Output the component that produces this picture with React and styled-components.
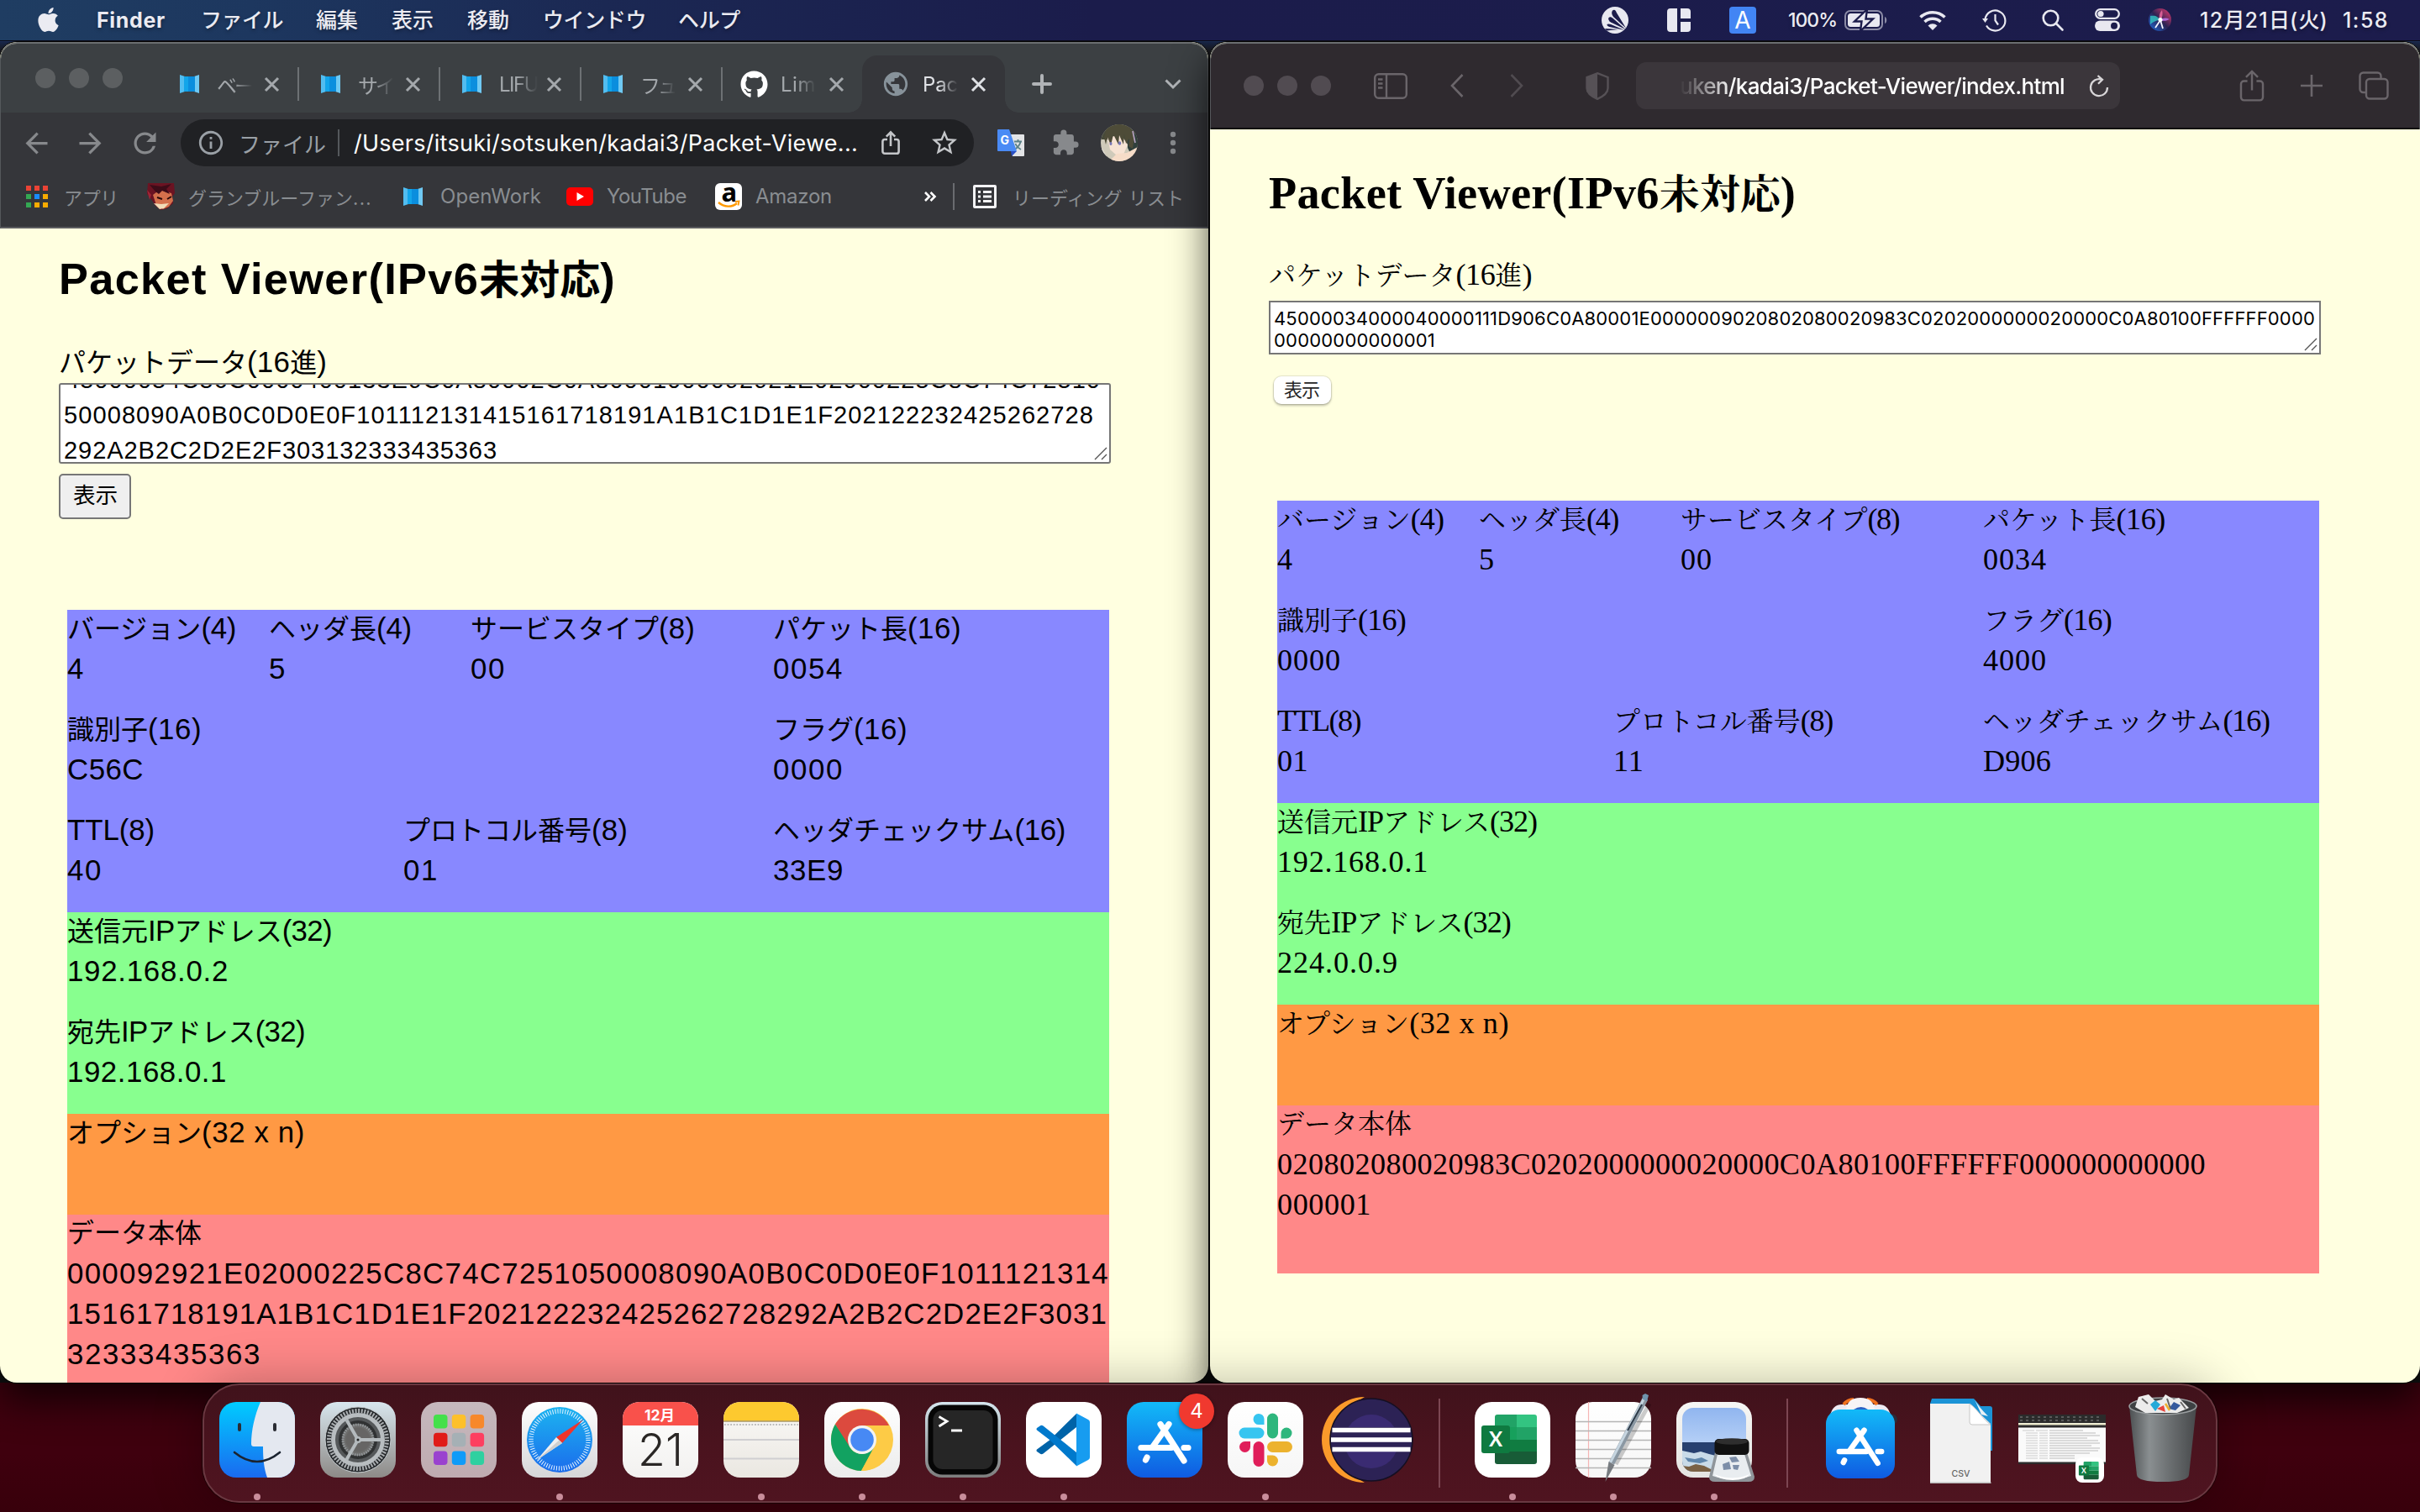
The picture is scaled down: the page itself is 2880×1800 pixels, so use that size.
import React, { useLayoutEffect, useRef, useState } from "react";
import styled, { createGlobalStyle, css } from "styled-components";
import { FaApple, FaGithub } from "react-icons/fa";
import {
  MdArrowBack,
  MdArrowForward,
  MdRefresh,
  MdInfoOutline,
  MdStarBorder,
  MdExtension,
  MdPublic,
} from "react-icons/md";

const GOTHIC = '"Liberation Sans", "Noto Sans CJK JP", sans-serif';
const MINCHO = '"Liberation Serif", "Noto Serif CJK JP", "Noto Sans CJK JP", serif';
const SYSTEM = 'Inter, "Noto Sans CJK JP", sans-serif';

const Global = createGlobalStyle`
  * { box-sizing: border-box; }
  html, body { margin: 0; padding: 0; }
  body { width: 2880px; height: 1800px; overflow: hidden; background: #3b000c; }
  svg { display: block; overflow: visible; flex: none; }
`;

/* ---------- Text ---------- */

const Line = styled.span`
  display: block;
  flex: none;
  white-space: nowrap;
  width: ${(p) => (p.$w ? `${p.$w}px` : "auto")};
  margin-left: ${(p) => p.$ml || 0}px;
  font-size: ${(p) => (p.$size ? `${p.$size}px` : "inherit")};
  font-weight: ${(p) => p.$weight || "inherit"};
  color: ${(p) => p.$color || "inherit"};
  ${(p) =>
    p.$fade === "right" &&
    css`
      overflow: hidden;
      mask-image: linear-gradient(90deg, #000 45%, transparent 100%);
    `}
  ${(p) =>
    p.$fade === "left" &&
    css`
      mask-image: linear-gradient(90deg, transparent 0, #000 14%);
    `}
`;
const Latin = styled.span`
  font-size: ${(p) => p.$scale}em;
  letter-spacing: var(--track);
`;
const Kana = styled.span`
  letter-spacing: ${(p) => (p.$tracked ? "var(--track)" : 0)};
`;

/* One line of text tracked to a given measure. */
function Text({ children, w, scale = 1, ...rest }) {
  const inner = useRef(null);
  const [track, setTrack] = useState(0);
  const runs = children.match(/[\x20-\x7e]+|[^\x20-\x7e]+/g);
  const latin = runs.filter((r) => /^[\x20-\x7e]/.test(r)).join("").length;
  useLayoutEffect(() => {
    if (!w) return;
    const natural = inner.current.getBoundingClientRect().width;
    setTrack((w - natural) / (latin || children.length));
  }, [children, w, latin]);
  return (
    <Line $w={w} style={{ "--track": `${track}px` }} {...rest}>
      <span ref={inner}>
        {runs.map((r, i) =>
          /^[\x20-\x7e]/.test(r) ? (
            <Latin key={i} $scale={scale}>{r}</Latin>
          ) : (
            <Kana key={i} $tracked={latin === 0}>{r}</Kana>
          )
        )}
      </span>
    </Line>
  );
}

/* ---------- Shell ---------- */

const Desktop = styled.div`
  width: 2880px;
  height: 1800px;
  display: flex;
  flex-direction: column;
  overflow: hidden;
  font-family: ${SYSTEM};
  background: linear-gradient(180deg, #2c5078 0, #1b2a55 60px, #3a000c 120px, #3f000e 1730px, #38000b 1800px);
`;
const MenuBar = styled.header`
  height: 49px;
  flex: none;
  display: flex;
  align-items: center;
  padding-left: 43px;
  padding-bottom: 1px;
  color: #ebebf2;
  font-size: 25px;
  line-height: 48px;
  font-weight: 500;
  position: relative;
  z-index: 5;
  border-bottom: 1px solid #0b0b16;
  background: linear-gradient(90deg, #1f3d62 0, #1d375f 300px, #1b2853 720px, #1b1c4b 1300px, #1c1c4c 2880px);
  text-shadow: 0 2px 4px rgba(0, 0, 0, 0.35);
`;
const Icon = styled.span`
  display: flex;
  flex: none;
  align-items: center;
  justify-content: center;
  width: ${(p) => p.$w}px;
  margin-left: ${(p) => p.$ml || 0}px;
  color: ${(p) => p.$color || "inherit"};
`;
const InputSource = styled.span`
  width: 32px;
  height: 32px;
  flex: none;
  margin-left: 46px;
  border-radius: 4px;
  background: #4285f4;
  color: #fff;
  font-size: 28px;
  line-height: 32px;
  text-align: center;
  font-weight: 400;
  text-shadow: none;
`;
const Windows = styled.main`
  display: flex;
  gap: 2px;
  height: 1597px;
  flex: none;
  background: linear-gradient(180deg, #1a2a52 0, #1c1c20 12px, #18181a 1560px, #101112 100%);
  background-clip: content-box;
  padding-top: 1px;
`;
const Window = styled.section`
  position: relative;
  z-index: ${(p) => p.$z};
  width: ${(p) => p.$w}px;
  flex: none;
  height: 1596px;
  border-radius: 20px;
  overflow: hidden;
  display: flex;
  flex-direction: column;
  background: #ffffe0;
  box-shadow: 0 0 0 1px #060606, 0 20px 46px rgba(0, 0, 0, 0.72);
`;
const Chrome = styled.div`
  flex: none;
  border-top: 2px solid #6b6e70;
  border-left: 1px solid #55585b;
  border-right: 1px solid #55585b;
  border-radius: 20px 20px 0 0;
  overflow: hidden;
`;
const Lights = styled.div`
  display: flex;
  flex: none;
  gap: 16px;
  margin-left: ${(p) => p.$ml}px;
  & > i {
    width: 24px;
    height: 24px;
    border-radius: 50%;
    background: ${(p) => p.$color};
  }
`;

/* ---------- Chrome window ---------- */

const TabStrip = styled.div`
  height: 82px;
  display: flex;
  align-items: center;
  padding-top: 14px;
  background: #3c4043;
  color: #a4a8ac;
  font-size: 24px;
`;
const TabLights = styled(Lights)`
  margin-bottom: 14px;
`;
const Tab = styled.div`
  height: 68px;
  flex: none;
  display: flex;
  align-items: center;
  width: ${(p) => p.$w}px;
  padding-left: ${(p) => p.$pl}px;
  position: relative;
  ${(p) =>
    p.$active &&
    css`
      color: #dfe1e5;
      background: #35363a;
      border-radius: 18px 18px 0 0;
      &::before,
      &::after {
        content: "";
        position: absolute;
        bottom: 0;
        width: 16px;
        height: 16px;
      }
      &::before {
        left: -16px;
        background: radial-gradient(circle at 0 0, transparent 15.5px, #35363a 16px);
      }
      &::after {
        right: -16px;
        background: radial-gradient(circle at 100% 0, transparent 15.5px, #35363a 16px);
      }
    `}
`;
const Rule = styled.i`
  width: 2px;
  flex: none;
  height: ${(p) => p.$h}px;
  margin-left: ${(p) => p.$ml || 0}px;
  background: ${(p) => p.$color || "#6d7174"};
`;
const Toolbar = styled.div`
  height: 72px;
  display: flex;
  align-items: center;
  background: #35363a;
  color: #87898c;
`;
const Omnibox = styled.div`
  width: 944px;
  height: 56px;
  flex: none;
  margin-left: 23px;
  border-radius: 28px;
  background: #202124;
  display: flex;
  align-items: center;
  font-size: 27px;
  color: #9aa0a6;
`;
const Bookmarks = styled.div`
  height: 66px;
  display: flex;
  align-items: center;
  padding-bottom: 9px;
  background: #35363a;
  border-bottom: 2px solid #5b5c60;
  color: #898d91;
  font-size: 24px;
`;
const AppsGrid = styled.div`
  display: grid;
  flex: none;
  grid-template-columns: repeat(3, 6px);
  grid-auto-rows: 6px;
  gap: 4px;
  margin-left: 30px;
`;
const Dot = styled.i`
  background: ${(p) => p.$c};
`;
const Avatar = styled.span`
  width: 44px;
  height: 44px;
  flex: none;
  margin-left: 25px;
  border-radius: 50%;
  overflow: hidden;
`;
const AmazonBadge = styled.span`
  width: 32px;
  height: 32px;
  flex: none;
  margin-left: 34px;
  border-radius: 6px;
  background: #fff;
`;

/* ---------- Safari window ---------- */

const SafariBar = styled.div`
  height: 102px;
  display: flex;
  align-items: center;
  background: #2f2a2f;
  color: #6a656a;
  border-bottom: 2px solid #0c0a0c;
`;
const AddressField = styled.div`
  width: 576px;
  height: 56px;
  flex: none;
  margin-left: 32px;
  padding-left: 52px;
  border-radius: 12px;
  background: #3b363b;
  color: #fff;
  font-size: 26px;
  font-weight: 500;
  display: flex;
  align-items: center;
`;

/* ---------- Packet Viewer page ---------- */

const Page = styled.div`
  flex: 1;
  min-height: 0;
  overflow: hidden;
  display: flex;
  flex-direction: column;
  padding: ${(p) => p.$pt}px 0 0 70px;
  color: #000;
  font-family: ${(p) => p.$font};
  font-size: 32px;
  line-height: 48px;
  ${Line} {
    height: 1lh;
  }
`;
const Heading = styled.h1`
  margin: 0;
  height: 72px;
  font-size: 48px;
  line-height: 72px;
  font-weight: 700;
`;
const Label = styled.div`
  height: 48px;
  margin-top: ${(p) => p.$mt}px;
`;
const Area = styled.div`
  width: 1252px;
  height: ${(p) => p.$h}px;
  flex: none;
  margin-top: ${(p) => p.$mt}px;
  border: 2px solid #767676;
  border-radius: ${(p) => p.$r}px;
  background: #fff;
  overflow: hidden;
  display: flex;
  flex-direction: column;
  justify-content: ${(p) => p.$justify};
  padding: ${(p) => p.$pad};
  font-family: ${(p) => p.$font};
  font-size: ${(p) => p.$size}px;
  line-height: ${(p) => p.$lh}px;
  position: relative;
  & > svg {
    position: absolute;
    right: 2px;
    bottom: 2px;
  }
`;
const Scrolled = styled.div`
  flex: none;
  margin-bottom: -7px;
`;
const ChromeButton = styled.div`
  width: 86px;
  height: 54px;
  flex: none;
  margin-top: 12px;
  border: 2px solid #767676;
  border-radius: 5px;
  background: #efefef;
  font-size: 26.67px;
  line-height: 48px;
  padding-left: 15px;
`;
const SafariButton = styled.div`
  width: 68px;
  height: 33px;
  flex: none;
  margin: 26px 0 0 6px;
  border-radius: 9px;
  background: #fff;
  color: #262626;
  box-shadow: 0 0 1px 1px rgba(0, 0, 0, 0.1), 0 2px 3px rgba(0, 0, 0, 0.25);
  font-family: ${SYSTEM};
  font-size: 22px;
  line-height: 33px;
  padding-left: 12px;
`;
const Packet = styled.div`
  width: 1240px;
  flex: none;
  margin: ${(p) => p.$mt}px 0 0 10px;
`;
const Band = styled.div`
  background: ${(p) => p.$color};
  height: ${(p) => (p.$h ? `${p.$h}px` : "auto")};
`;
const FieldRow = styled.div`
  display: grid;
  grid-template-columns: ${(p) => p.$cols};
  height: 120px;
`;
const FieldBox = styled.div`
  margin-top: -2px;
`;

function Field({ name, values = [], scale }) {
  return (
    <FieldBox>
      <Text w={name[1]} scale={scale}>{name[0]}</Text>
      {values.map(([v, w]) => (
        <Text key={v} w={w} scale={scale}>{v}</Text>
      ))}
    </FieldBox>
  );
}

const COLS = {
  4: "240px 240px 360px 400px",
  3: "400px 440px 400px",
  2: "840px 400px",
  1: "1240px",
};

function PacketTable({ bands, mt, scale }) {
  return (
    <Packet $mt={mt}>
      {bands.map((b) => (
        <Band key={b.color} $color={b.color} $h={b.h}>
          {b.rows.map((row, i) => (
            <FieldRow key={i} $cols={COLS[row.length]}>
              {row.map((f) => (
                <Field key={f[0][0]} name={f[0]} values={f.slice(1)} scale={scale} />
              ))}
            </FieldRow>
          ))}
        </Band>
      ))}
    </Packet>
  );
}

const LEFT = [
  {
    color: "#8888ff",
    rows: [
      [
        [["バージョン(4)", 201], ["4", 21]],
        [["ヘッダ長(4)", 170], ["5", 21]],
        [["サービスタイプ(8)", 267], ["00", 42]],
        [["パケット長(16)", 224], ["0054", 84]],
      ],
      [
        [["識別子(16)", 160], ["C56C", 91]],
        [["フラグ(16)", 160], ["0000", 84]],
      ],
      [
        [["TTL(8)", 104], ["40", 42]],
        [["プロトコル番号(8)", 267], ["01", 42]],
        [["ヘッダチェックサム(16)", 348], ["33E9", 84]],
      ],
    ],
  },
  {
    color: "#88ff8f",
    rows: [
      [[["送信元IPアドレス(32)", 315], ["192.168.0.2", 192]]],
      [[["宛先IPアドレス(32)", 283], ["192.168.0.1", 190]]],
    ],
  },
  { color: "#ff9944", rows: [[[["オプション(32 x n)", 283]]]] },
  {
    color: "#ff8888",
    h: 240,
    rows: [
      [
        [
          ["データ本体", 160],
          ["000092921E02000225C8C74C7251050008090A0B0C0D0E0F1011121314", 1240],
          ["15161718191A1B1C1D1E1F202122232425262728292A2B2C2D2E2F3031", 1238],
          ["32333435363", 231],
        ],
      ],
    ],
  },
];

const RIGHT = [
  {
    color: "#8888ff",
    rows: [
      [
        [["バージョン(4)", 198], ["4", 19]],
        [["ヘッダ長(4)", 166], ["5", 19]],
        [["サービスタイプ(8)", 260], ["00", 38]],
        [["パケット長(16)", 217], ["0034", 76]],
      ],
      [
        [["識別子(16)", 153], ["0000", 76]],
        [["フラグ(16)", 153], ["4000", 76]],
      ],
      [
        [["TTL(8)", 99], ["01", 37]],
        [["プロトコル番号(8)", 261], ["11", 37]],
        [["ヘッダチェックサム(16)", 341], ["D906", 81]],
      ],
    ],
  },
  {
    color: "#88ff8f",
    rows: [
      [[["送信元IPアドレス(32)", 309], ["192.168.0.1", 180]]],
      [[["宛先IPアドレス(32)", 278], ["224.0.0.9", 144]]],
    ],
  },
  { color: "#ff9944", rows: [[[["オプション(32 x n)", 276]]]] },
  {
    color: "#ff8888",
    h: 200,
    rows: [
      [
        [
          ["データ本体", 160],
          ["020802080020983C0202000000020000C0A80100FFFFFF000000000000", 1105],
          ["000001", 112],
        ],
      ],
    ],
  },
];

const Grip = ({ s = 16 }) => (
  <svg width={s} height={s} viewBox="0 0 16 16" stroke="#555" strokeWidth="1.4">
    <path d="M1 15 15 1M9 15l6-6" />
  </svg>
);

/* ---------- Small icons ---------- */

const Book = () => (
  <svg width="23" height="22" viewBox="0 0 23 22">
    <path d="M0 0 6 2v18l-6 2z" fill="#52bdf0" />
    <path d="M23 0l-6 2v18l6 2z" fill="#6fc9f3" />
    <path d="M5 2h13v18H5z" fill="#0a8ede" />
    <path d="M5 2h5v18H5z" fill="#12a5ea" />
  </svg>
);
const Cross = () => (
  <svg width="17" height="17" viewBox="0 0 17 17" stroke="currentColor" strokeWidth="3">
    <path d="M1 1l15 15M16 1 1 16" />
  </svg>
);
const Share = ({ w = 22, h = 28, sw = 2.6 }) => (
  <svg width={w} height={h} viewBox="0 0 22 28" fill="none" stroke="currentColor" strokeWidth={sw}>
    <path d="M7 10H4a2.6 2.6 0 0 0-2.6 2.6v11.6A2.6 2.6 0 0 0 4 26.8h14a2.6 2.6 0 0 0 2.6-2.6V12.6A2.6 2.6 0 0 0 18 10h-3" />
    <path d="M11 18V1.6M5.8 6.6 11 1.4l5.2 5.2" />
  </svg>
);
const Translate = () => (
  <svg width="32" height="32" viewBox="0 0 32 32">
    <path d="M13 6h18a1 1 0 0 1 1 1v24a1 1 0 0 1-1 1H18z" fill="#e3e4e6" />
    <path d="M20 14.500h9M24.500 12v2.500M27.500 15c-1 4-4 7-7 9M21.500 17c1 3 4 5.500 6.500 7" stroke="#5b8187" strokeWidth="1.8" fill="none" />
    <path d="M16 26h7l-6 6z" fill="#2a4fc4" />
    <path d="M1 0h13l9 26H1a1 1 0 0 1-1-1V1a1 1 0 0 1 1-1z" fill="#4a8bf5" />
    <text x="3.500" y="18" fontSize="14" fontWeight="700" fill="#fff" fontFamily="Inter, sans-serif">G</text>
  </svg>
);
const Portrait = () => (
  <svg width="44" height="44" viewBox="0 0 44 44">
    <rect width="44" height="44" fill="#cfcaba" />
    <path d="M0 12Q18-10 44 6v22l-8-2-20-8H0z" fill="#474a3a" />
    <path d="M32 8l12 4v20l-8 4-4-8z" fill="#2f3f3c" />
    <path d="M8 16l16-4 8 12-5 12-8 1-8-7z" fill="#f7e3d4" />
    <path d="M4 16 7 4l15-5 12 4 6 12-2 14-5-3 1-9-4 6-2-12-1 13-5-11-1 11-6-12-3 13-4-10-2 9z" fill="#4e4c38" />
    <path d="M10 44l9-9 12-1 13-7v17z" fill="#f6dcc8" />
    <path d="M0 26l10 18H0z" fill="#f1eee8" />
    <ellipse cx="12" cy="23" rx="1.500" ry="2" fill="#7777b8" />
    <ellipse cx="22.500" cy="22.500" rx="1.700" ry="2.200" fill="#7777b8" />
    <path d="M38 8l3 14" stroke="#b9a4c4" strokeWidth="1.600" />
  </svg>
);
const RedHero = () => (
  <svg width="33" height="32" viewBox="0 0 33 32">
    <path d="M1 0h31l1 12-3 4 1 8-7 6-8 2-6-5-5-8-5-6z" fill="#6b1322" />
    <path d="M7 14l8-6 14 4 2 9-5 7-7 3-8-5z" fill="#d4704c" />
    <path d="M3 2l14 2 12-3-6 6 4 6-9-4-4 4-4-3z" fill="#3d0c18" />
    <path d="M12 17l6 2M29 16l-5 3" stroke="#2a0a0a" strokeWidth="2" />
    <path d="M8 24l9 1 9-1-6 6-5 1z" fill="#f1dcb8" />
    <path d="M0 8l5 6-2 6" fill="#a02537" />
  </svg>
);
const ReadingList = () => (
  <svg width="28" height="28" viewBox="0 0 28 28">
    <path d="M0 2a2 2 0 0 1 2-2h24a2 2 0 0 1 2 2v24a2 2 0 0 1-2 2H2a2 2 0 0 1-2-2zM3 3v22h22V3z" fill="#f3f3f5" fillRule="evenodd" />
    <path d="M6 8.500h3M12 8.500h10M6 14h3M12 14h10M6 19.500h3M12 19.500h10" stroke="#f3f3f5" strokeWidth="3" />
  </svg>
);
const Avast = () => (
  <svg width="32" height="32" viewBox="0 0 32 32">
    <circle cx="16" cy="16" r="16" fill="#e8e8f0" />
    <path d="M13 4.500c2.500-2 4 0 4.800 2.500L29 25.500 14 12c-2-2.500-2.500-5.500-1-7.500z" fill="#1c1c4b" />
    <path d="M8.500 13c1.500-1.500 3.500-.5 5 .8L28.500 27 11 18.500c-2.500-1.500-3.500-4-2.500-5.500z" fill="#1c1c4b" />
    <path d="M6.500 21c1-1 3-.5 4.500 0l16.500 7-18-4c-2-.6-3.500-2-3-3z" fill="#1c1c4b" />
    <path d="M4 26l16 1-14 1.500z" fill="#1c1c4b" />
  </svg>
);
const Panes = () => (
  <svg width="28" height="28" viewBox="0 0 28 28" fill="#e8e8f0">
    <path d="M4 0h8v28H4a4 4 0 0 1-4-4V4a4 4 0 0 1 4-4zM16 0h8a4 4 0 0 1 4 4v8H16zM16 16h12v8a4 4 0 0 1-4 4h-8z" />
  </svg>
);
const Battery = () => (
  <svg width="52" height="24" viewBox="0 0 52 24">
    <rect x="1" y="1" width="44" height="22" rx="6" fill="none" stroke="#8b8ba6" strokeWidth="2" />
    <path d="M48 8c3 1 3 7 0 8z" fill="#8b8ba6" />
    <rect x="4" y="4" width="38" height="16" rx="3.500" fill="#e8e8f0" />
    <path d="M27-1 12 13.500h8.500L19 25 34 10.500h-8.500z" fill="#e8e8f0" stroke="#1c1c4b" strokeWidth="2.400" />
  </svg>
);
const Wifi = () => (
  <svg width="32" height="24" viewBox="0 0 32 24" fill="none" stroke="#e8e8f0" strokeWidth="3.600">
    <path d="M1.500 8.500a21 21 0 0 1 29 0M6.500 14a14 14 0 0 1 19 0" />
    <path d="M16 24l-5.500-5.600a8 8 0 0 1 11 0z" fill="#e8e8f0" stroke="none" />
  </svg>
);
const TimeMachine = () => (
  <svg width="28" height="26" viewBox="0 0 28 26" fill="none" stroke="#e8e8f0" strokeWidth="2.200">
    <path d="M3.500 12A12 12 0 1 1 5 19.500" />
    <path d="M0 11h7l-3.500 5z" fill="#e8e8f0" stroke="none" />
    <path d="M15.500 6v7.500l3.500 5" />
  </svg>
);
const Search = () => (
  <svg width="26" height="26" viewBox="0 0 26 26" fill="none" stroke="#e8e8f0" strokeWidth="2.600">
    <circle cx="10.500" cy="10.500" r="8.800" />
    <path d="M17 17l7.500 7.500" strokeLinecap="round" />
  </svg>
);
const ControlCenter = () => (
  <svg width="30" height="27" viewBox="0 0 30 27">
    <rect x="1.200" y="1.200" width="27.600" height="10.600" rx="5.300" fill="none" stroke="#e8e8f0" strokeWidth="2.300" />
    <circle cx="7" cy="6.500" r="3.600" fill="#e8e8f0" />
    <rect y="14.500" width="30" height="12.500" rx="6.200" fill="#e8e8f0" />
    <circle cx="23" cy="20.700" r="4" fill="#1c1c4b" />
  </svg>
);
const Siri = () => (
  <svg width="27" height="27" viewBox="0 0 27 27">
    <defs>
      <linearGradient id="siri" x1="0" y1="1" x2="1" y2="0">
        <stop offset="0" stopColor="#1c6fe0" />
        <stop offset=".5" stopColor="#2c2352" />
        <stop offset="1" stopColor="#ee3c73" />
      </linearGradient>
    </defs>
    <circle cx="13.500" cy="13.500" r="13.500" fill="url(#siri)" />
    <path d="M2 9c7-1 9 1 12 5-5 0-9 2-12 5z" fill="#35c8c4" opacity=".8" />
    <path d="M14 14c3-3 7-3 11-1-3 1-6 3-11 1z" fill="#b06ad8" />
    <path d="M13 14c-1-5 0-9 3-12 1 4 1 8-2 12z" fill="#f36ba4" opacity=".8" />
    <path d="M14 14l-6 9M14 14l3 10" stroke="#f6f6ff" strokeWidth="1.800" />
    <circle cx="14" cy="13.500" r="2.500" fill="#fff" />
  </svg>
);
const Sidebar = () => (
  <svg width="40" height="31" viewBox="0 0 40 31" fill="none" stroke="currentColor" strokeWidth="2.400">
    <rect x="1.200" y="1.200" width="37.600" height="28.600" rx="4.500" />
    <path d="M15 1v29M5 7.500h5.500M5 12.500h5.500M5 17.500h5.500" />
  </svg>
);
const Shield = () => (
  <svg width="28" height="33" viewBox="0 0 28 33">
    <path d="M14 1.200 26.500 6v13c0 6-6 10-12.500 12.800C7.500 29 1.500 25 1.500 19V6z" fill="none" stroke="#565156" strokeWidth="2.400" />
    <path d="M14 1v31C7 29 1.500 25 1.500 19V6z" fill="#565156" />
  </svg>
);

function Menu() {
  return (
    <MenuBar>
      <Icon $w={28}><FaApple size={33} /></Icon>
      <Text w={82} $ml={44} $weight={700}>Finder</Text>
      <Text w={98} $ml={42}>ファイル</Text>
      <Text w={50} $ml={39}>編集</Text>
      <Text w={50} $ml={40}>表示</Text>
      <Text w={50} $ml={40}>移動</Text>
      <Text w={123} $ml={40}>ウインドウ</Text>
      <Text w={74} $ml={38}>ヘルプ</Text>
      <Icon $w={32} $ml={1025}><Avast /></Icon>
      <Icon $w={28} $ml={46}><Panes /></Icon>
      <InputSource>A</InputSource>
      <Text w={58} $ml={38} $size={23}>100%</Text>
      <Icon $w={52} $ml={9}><Battery /></Icon>
      <Icon $w={32} $ml={37}><Wifi /></Icon>
      <Icon $w={28} $ml={43}><TimeMachine /></Icon>
      <Icon $w={26} $ml={43}><Search /></Icon>
      <Icon $w={30} $ml={37}><ControlCenter /></Icon>
      <Icon $w={27} $ml={34}><Siri /></Icon>
      <Text w={153} $ml={34}>12月21日(火)</Text>
      <Text w={55} $ml={17}>1:58</Text>
    </MenuBar>
  );
}

const TABS = ["ベー", "サイ", "LIFU", "フュ"];
const GRID = ["#ea4335", "#ea4335", "#ea4335", "#34a853", "#1a8cff", "#f9ab00", "#34a853", "#f9ab00", "#f9ab00"];

function ChromeWindow() {
  return (
    <Window $w={1438} $z={1}>
      <Chrome>
        <TabStrip>
          <TabLights $ml={41} $color="#5c5f61"><i /><i /><i /></TabLights>
          <Icon $w={41} />
          {TABS.map((t, i) => (
            <Tab key={t} $w={168} $pl={27}>
              <Icon $w={23}><Book /></Icon>
              <Text w={i === 2 ? 46 : 42} $ml={21} $fade="right">{t}</Text>
              <Icon $w={17} $ml={i === 2 ? 11 : 15}><Cross /></Icon>
              <Rule $h={40} $ml={22} />
            </Tab>
          ))}
          <Tab $w={167} $pl={22}>
            <Icon $w={32} $color="#fff"><FaGithub size={33} /></Icon>
            <Text w={42} $ml={16} $fade="right">Lim</Text>
            <Icon $w={17} $ml={16}><Cross /></Icon>
          </Tab>
          <Tab $w={170} $pl={24} $active>
            <Icon $w={32} $color="#87929a"><MdPublic size={34} /></Icon>
            <Text w={42} $ml={16} $fade="right">Pac</Text>
            <Icon $w={17} $ml={16}><Cross /></Icon>
          </Tab>
          <Icon $w={24} $ml={32}>
            <svg width="24" height="24" viewBox="0 0 24 24" stroke="#b0b3b6" strokeWidth="4" strokeLinecap="round">
              <path d="M12 2v20M2 12h20" />
            </svg>
          </Icon>
          <Icon $w={20} $ml={134}>
            <svg width="20" height="12" viewBox="0 0 20 12" fill="none" stroke="#b0b3b6" strokeWidth="3">
              <path d="M1.500 1.500 10 10l8.500-8.500" />
            </svg>
          </Icon>
        </TabStrip>
        <Toolbar>
          <Icon $w={40} $ml={22}><MdArrowBack size={39} /></Icon>
          <Icon $w={40} $ml={24}><MdArrowForward size={39} /></Icon>
          <Icon $w={40} $ml={25}><MdRefresh size={39} /></Icon>
          <Omnibox>
            <Icon $w={34} $ml={19}><MdInfoOutline size={34} /></Icon>
            <Text w={104} $ml={16} $size={26}>ファイル</Text>
            <Rule $h={32} $ml={14} $color="#55585c" />
            <Text w={600} $ml={17} $color="#fff">/Users/itsuki/sotsuken/kadai3/Packet-Viewe...</Text>
            <Icon $w={22} $ml={28} $color="#c4c6c9"><Share /></Icon>
            <Icon $w={36} $ml={35} $color="#c4c6c9"><MdStarBorder size={36} /></Icon>
          </Omnibox>
          <Icon $w={32} $ml={28}><Translate /></Icon>
          <Icon $w={34} $ml={32}><MdExtension size={34} /></Icon>
          <Avatar><Portrait /></Avatar>
          <Icon $w={8} $ml={38}>
            <svg width="8" height="28" viewBox="0 0 8 28" fill="#87898c">
              <circle cx="4" cy="4" r="3.200" /><circle cx="4" cy="14" r="3.200" /><circle cx="4" cy="24" r="3.200" />
            </svg>
          </Icon>
        </Toolbar>
        <Bookmarks>
          <AppsGrid>{GRID.map((c, i) => <Dot key={i} $c={c} />)}</AppsGrid>
          <Text w={65} $ml={19} $size={22}>アプリ</Text>
          <Icon $w={33} $ml={34}><RedHero /></Icon>
          <Text w={219} $ml={16} $size={22}>グランブルーファン...</Text>
          <Icon $w={23} $ml={37}><Book /></Icon>
          <Text w={120} $ml={21}>OpenWork</Text>
          <Icon $w={32} $ml={30}>
            <svg width="32" height="22" viewBox="0 0 32 22"><rect width="32" height="22" rx="5" fill="#f00" /><path d="M12.500 6v10l8.500-5z" fill="#fff" /></svg>
          </Icon>
          <Text w={95} $ml={16}>YouTube</Text>
          <AmazonBadge>
            <svg width="32" height="32" viewBox="0 0 32 32">
              <text x="7.500" y="22" fontSize="31" fontWeight="700" fontFamily="'Noto Sans', sans-serif">a</text>
              <path d="M4 23c7 6 16 6 22 1" fill="none" stroke="#f90" strokeWidth="2.400" />
              <path d="M24 22l4.500-.5-1 5" fill="none" stroke="#f90" strokeWidth="1.800" />
            </svg>
          </AmazonBadge>
          <Text w={91} $ml={16}>Amazon</Text>
          <Icon $w={14} $ml={110}>
            <svg width="14" height="12" viewBox="0 0 14 12" fill="none" stroke="#fff" strokeWidth="2.600">
              <path d="M1 1l5 5-5 5M7.500 1l5 5-5 5" />
            </svg>
          </Icon>
          <Rule $h={32} $ml={20} $color="#6a6c70" />
          <Icon $w={28} $ml={22}><ReadingList /></Icon>
          <Text w={204} $ml={19} $size={22}>リーディング リスト</Text>
        </Bookmarks>
      </Chrome>
      <Page $pt={24} $font={GOTHIC}>
        <Heading><Text w={663} scale={1.09}>Packet Viewer(IPv6未対応)</Text></Heading>
        <Label $mt={39}><Text w={319} scale={1.09}>パケットデータ(16進)</Text></Label>
        <Area $h={96} $mt={1} $r={3} $justify="flex-end" $pad="0 0 0 4px" $font={GOTHIC} $size={26.67} $lh={42}>
          <Scrolled>
            <Text w={1232} $ml={2} scale={1.09}>45000054C56C0000400133E9C0A80002C0A80001000092921E02000225C8C74C72510</Text>
            <Text w={1226} scale={1.09}>50008090A0B0C0D0E0F101112131415161718191A1B1C1D1E1F202122232425262728</Text>
            <Text w={516} scale={1.09}>292A2B2C2D2E2F303132333435363</Text>
          </Scrolled>
          <Grip />
        </Area>
        <ChromeButton><Text w={53}>表示</Text></ChromeButton>
        <PacketTable bands={LEFT} mt={108} scale={1.09} />
      </Page>
    </Window>
  );
}

function SafariWindow() {
  return (
    <Window $w={1440} $z={2}>
      <Chrome>
        <SafariBar>
          <Lights $ml={39} $color="#514b51"><i /><i /><i /></Lights>
          <Icon $w={40} $ml={51}><Sidebar /></Icon>
          <Icon $w={16} $ml={51}>
            <svg width="16" height="28" viewBox="0 0 16 28" fill="none" stroke="currentColor" strokeWidth="2.600"><path d="M14.500 1 2 14l12.500 13" /></svg>
          </Icon>
          <Icon $w={16} $ml={55} $color="#504b50">
            <svg width="16" height="28" viewBox="0 0 16 28" fill="none" stroke="currentColor" strokeWidth="2.600"><path d="M1.500 1 14 14 1.500 27" /></svg>
          </Icon>
          <Icon $w={28} $ml={74}><Shield /></Icon>
          <AddressField>
            <Text w={458} $fade="left">uken/kadai3/Packet-Viewer/index.html</Text>
            <Icon $w={24} $ml={29} $color="#d7d5d7">
              <svg width="24" height="27" viewBox="0 0 24 27" fill="none" stroke="currentColor" strokeWidth="2.300">
                <path d="M15 5.600A10 10 0 1 0 22 15M10.500 1l5.500 4.800-5 5" />
              </svg>
            </Icon>
          </AddressField>
          <Icon $w={30} $ml={142}><Share w={30} h={38} sw={1.8} /></Icon>
          <Icon $w={28} $ml={42}>
            <svg width="28" height="28" viewBox="0 0 28 28" stroke="currentColor" strokeWidth="2.600"><path d="M14 1v26M1 14h26" /></svg>
          </Icon>
          <Icon $w={36} $ml={42}>
            <svg width="36" height="34" viewBox="0 0 36 34" fill="none" stroke="currentColor" strokeWidth="2.400">
              <path d="M8 25H5.500A4 4 0 0 1 1.500 21V5.500a4 4 0 0 1 4-4h17a4 4 0 0 1 4 4V8" />
              <rect x="9" y="9" width="25.500" height="23.500" rx="4" />
            </svg>
          </Icon>
        </SafariBar>
      </Chrome>
      <Page $pt={40} $font={MINCHO}>
        <Heading><Text w={627} scale={1.13}>Packet Viewer(IPv6未対応)</Text></Heading>
        <Label $mt={37}><Text w={313} scale={1.13}>パケットデータ(16進)</Text></Label>
        <Area $h={64} $mt={7} $r={0} $justify="flex-start" $pad="6px 0 0 4px" $font={SYSTEM} $size={22} $lh={26}>
          <Text w={1239}>45000034000040000111D906C0A80001E0000009020802080020983C0202000000020000C0A80100FFFFFF0000</Text>
          <Text w={192}>00000000000001</Text>
          <Grip />
        </Area>
        <SafariButton><Text w={42}>表示</Text></SafariButton>
        <PacketTable bands={RIGHT} mt={115} scale={1.13} />
      </Page>
    </Window>
  );
}

/* ---------- Dock ---------- */

const DockBar = styled.nav`
  width: 2398px;
  height: 142px;
  flex: none;
  margin: 1px 0 0 241px;
  padding: 0 3px;
  border: 2px solid #6a3841;
  border-radius: 44px;
  background: linear-gradient(180deg, #40121b 0, #4a131e 50%, #4f1420 100%);
  display: flex;
  position: relative;
  z-index: 6;
  box-shadow: 0 0 0 1px rgba(0, 0, 0, 0.45), 0 0 60px rgba(0, 0, 0, 0.28);
`;
const Slot = styled.div`
  width: 120px;
  flex: none;
  display: flex;
  flex-direction: column;
  align-items: center;
  padding-top: 20px;
  position: relative;
  &::after {
    content: "";
    width: 8px;
    height: 8px;
    margin-top: 19px;
    border-radius: 50%;
    background: ${(p) => (p.$running ? "#c98d9b" : "transparent")};
  }
`;
const Divider = styled.i`
  width: 2px;
  height: 106px;
  flex: none;
  margin: 16px 26px 0;
  background: #7c4652;
`;
const Badge = styled.span`
  position: absolute;
  left: 77px;
  top: 10px;
  width: 42px;
  height: 42px;
  border-radius: 50%;
  background: #f0392f;
  color: #fff;
  font-size: 24px;
  line-height: 42px;
  text-align: center;
  box-shadow: 0 1px 4px rgba(0, 0, 0, 0.4);
`;

const Tile = ({ fill, children, id }) => (
  <svg width="90" height="90" viewBox="0 0 90 90">
    <defs>
      <clipPath id={`clip-${id}`}><rect width="90" height="90" rx="20" /></clipPath>
      <linearGradient id={`bg-${id}`} x1="0" y1="0" x2="0" y2="1">
        <stop offset="0" stopColor={fill[0]} />
        <stop offset="1" stopColor={fill[1]} />
      </linearGradient>
    </defs>
    <rect width="90" height="90" rx="20" fill={`url(#bg-${id})`} />
    {children}
  </svg>
);

const Finder = () => (
  <Tile id="finder" fill={["#00ccff", "#1a6af0"]}>
    <g clipPath="url(#clip-finder)">
      <path d="M49 0C42 16 38 34 38 50q0 3 3 3h11c0 14 1 26 5 37h35V0z" fill="#e4e8f0" />
    </g>
    <path d="M24 27v6M66 27v6" stroke="#2a2c33" strokeWidth="4" strokeLinecap="round" />
    <path d="M18 60q27 22 54 0" fill="none" stroke="#1b2330" strokeWidth="2.600" strokeLinecap="round" />
  </Tile>
);
const Settings = () => (
  <Tile id="settings" fill={["#d8e6ee", "#8d8a87"]}>
    <circle cx="45" cy="45" r="39" fill="#24272a" />
    <circle cx="45" cy="45" r="34.500" fill="none" stroke="#a9adb0" strokeWidth="5" strokeDasharray="2 1.610" />
    <circle cx="45" cy="45" r="29.500" fill="#55585a" stroke="#b8bdc0" strokeWidth="5" />
    <circle cx="45" cy="45" r="21" fill="#6d6d6c" stroke="#303233" strokeWidth="4" />
    <circle cx="45" cy="45" r="18" fill="none" stroke="#92979a" strokeWidth="3" strokeDasharray="1.500 1.300" />
    <circle cx="45" cy="45" r="14.500" fill="#666564" />
    <path d="M45 45h27M45 45 31.500 21.500M45 45 31.500 68.500" stroke="#b4babd" strokeWidth="4" />
    <circle cx="45" cy="45" r="4" fill="#b4babd" /><circle cx="45" cy="45" r="1.500" fill="#222" />
    <circle cx="45" cy="45" r="39" fill="none" stroke="#c5cbce" strokeWidth="1" />
  </Tile>
);
const PAD = ["#44e04a", "#fdc02b", "#f7882b", "#e01c18", "#a5b0b5", "#fd3f60", "#9a42cf", "#0f9bf8", "#2fd0a0"];
const Launchpad = () => (
  <Tile id="pad" fill={["#c6b8bd", "#bfabb0"]}>
    {PAD.map((c, i) => (
      <rect key={c} x={15 + (i % 3) * 21.8} y={15 + Math.floor(i / 3) * 21.8} width="16.500" height="16.500" rx="4" fill={c} />
    ))}
  </Tile>
);
const Safari = () => (
  <Tile id="safari" fill={["#ffffff", "#d6d6d8"]}>
    <defs>
      <linearGradient id="sea" x1="0" y1="0" x2="0" y2="1"><stop offset="0" stopColor="#1cb4f0" /><stop offset="1" stopColor="#1b6cec" /></linearGradient>
    </defs>
    <circle cx="45" cy="45" r="39" fill="url(#sea)" />
    <circle cx="45" cy="45" r="34" fill="none" stroke="#e7f4ff" strokeWidth="5.500" strokeDasharray="1 1.970" />
    <path d="M73 21 41 42l7 7z" fill="#f0352c" />
    <path d="M18 69 41 42l7 7z" fill="#f0f0f0" />
    <path d="M18 69 48 49l-3.500-3.500z" fill="#cfcfcf" />
  </Tile>
);
const Calendar = () => (
  <Tile id="cal" fill={["#ffffff", "#f2f1ef"]}>
    <path clipPath="url(#clip-cal)" d="M0 0h90v28H0z" fill="#f9514b" />
    <text x="44" y="22" textAnchor="middle" fontSize="17.500" fontWeight="700" fill="#fff" fontFamily='Inter, "Noto Sans CJK JP", sans-serif'>12月</text>
    <text x="45" y="76" textAnchor="middle" fontSize="54" fontWeight="300" textLength="54" lengthAdjust="spacingAndGlyphs" fill="#2a2725" fontFamily="Inter, sans-serif">21</text>
  </Tile>
);
const Notes = () => (
  <Tile id="notes" fill={["#fbfaf8", "#eae7e1"]}>
    <path clipPath="url(#clip-notes)" d="M0 0h90v23H0z" fill="#fdc92f" />
    <path d="M0 23h90" stroke="#a99665" strokeWidth="1.500" />
    <path d="M1 27h88" stroke="#bbb" strokeWidth="1.800" strokeDasharray="1.800 1.800" />
    <path d="M0 45h90M0 67.500h90" stroke="#d0cfd2" strokeWidth="1.800" />
  </Tile>
);
const ChromeIcon = () => (
  <Tile id="chrome" fill={["#ffffff", "#ececec"]}>
    <circle cx="45" cy="45" r="37" fill="#fdcb46" />
    <path d="M12.900 26.500A37 37 0 0 1 77 28H45L28.500 54z" fill="#dc4a3e" />
    <path d="M12.900 26.500 30.300 53.500C34 60 40 62 46 62l13-8-15 28A37 37 0 0 1 12.900 26.500z" fill="#12a261" />
    <path d="M45 28h32a37 37 0 0 1-33 54l15.700-28.500z" fill="#fdcb46" />
    <circle cx="45" cy="45" r="17" fill="#f3f3f3" /><circle cx="45" cy="45" r="13.800" fill="#4789f4" />
  </Tile>
);
const Terminal = () => (
  <Tile id="term" fill={["#d5e6ee", "#7d7d7d"]}>
    <rect x="3.500" y="3.500" width="83" height="83" rx="17" fill="#060606" />
    <rect x="9.500" y="10" width="71" height="70" rx="11" fill="#262626" />
    <path d="M16.500 17.500 26 23l-9.500 6M31 34h13" fill="none" stroke="#fff" strokeWidth="2.800" />
  </Tile>
);
const Code = () => (
  <Tile id="code" fill={["#ffffff", "#ffffff"]}>
    <path d="M60 14 28 45.500l-15 11q-1 1 0 2.500l4.500 3q1.500.5 3-.5L60 30z" fill="#0063a8" />
    <path d="M13 33.500q-1-1 0-2.500l4.500-3q1.500-.5 3 .5L60 60v16L28 45z" fill="#0079cc" />
    <path d="M60 13.500 74 21q2 1 2 3v42q0 2-2 3l-14 7.500z" fill="#179cf0" />
  </Tile>
);
const AMark = ({ s = 1, x = 0, y = 0 }) => (
  <g transform={`translate(${x} ${y}) scale(${s})`} stroke="#fff" strokeWidth="7.200" strokeLinecap="round" fill="none">
    <path d="M39.500 27.500 43 34M46 40l22 29M49.500 28 31 54M39.500 27.500l1 2M24 66l-2 3M17 55.500h36M67 55.500h6" opacity="0" />
    <path d="M40 27.500 68 71M50 27.500 31 54M24 67l-1.500 3M17 55.500h36M68 55.500h5" />
  </g>
);
const AppStore = () => (
  <Tile id="store" fill={["#12baf8", "#0f5be2"]}><AMark y={-1} /></Tile>
);
const Slack = () => (
  <Tile id="slack" fill={["#ffffff", "#f6f6f6"]}>
    <g strokeLinecap="round" strokeWidth="13">
      <path d="M20 37h17" stroke="#36c5f0" /><path d="M53.500 20v17" stroke="#2eb67d" />
      <path d="M53.500 53.500h17" stroke="#ecb22e" /><path d="M37 53.500v17" stroke="#e01e5a" />
    </g>
    <path d="M43.500 27V20a6.500 6.500 0 1 0-6.500 7z" fill="#36c5f0" />
    <path d="M63.500 43.500H70a6.500 6.500 0 1 0-6.500-6.500z" fill="#2eb67d" />
    <path d="M47 63.500V70a6.500 6.500 0 1 0 6.500-6.500z" fill="#ecb22e" />
    <path d="M27 47h-6.500a6.500 6.500 0 1 0 6.500 6.500z" fill="#e01e5a" />
  </Tile>
);
const Eclipse = () => (
  <svg width="90" height="90" viewBox="0 0 90 90">
    <path d="M43-6A51 51 0 0 0 43 96 58 58 0 0 1 43-6z" fill="#fb9a2b" />
    <circle cx="51" cy="45" r="49" fill="#2c2255" stroke="#140f22" strokeWidth="1.500" />
    <circle cx="51" cy="47" r="32" fill="#3f2f7c" opacity=".75" />
    <path d="M4 30h94v29H4z" fill="#2c2255" />
    <path d="M4.500 33.500h93M3 45h96M4.500 56.500h93" stroke="#fff" strokeWidth="5.500" />
  </svg>
);
const XSheet = ({ s = 1, x = 0, y = 0 }) => (
  <g transform={`translate(${x} ${y}) scale(${s})`}>
    <path d="M24 18q0-3 3-3h23v15H24z" fill="#21a366" /><path d="M50 15h21q3 0 3 3v12H50z" fill="#33c481" />
    <path d="M24 30h26v15H24z" fill="#17a05c" /><path d="M50 30h24v15H50z" fill="#21a366" />
    <path d="M24 45h50v14H24z" fill="#107c41" /><path d="M24 59h50v12q0 3-3 3H27q-3 0-3-3z" fill="#185c37" />
    <rect x="8" y="28" width="34" height="33" rx="3" fill="#0f7a40" />
    <text x="25" y="53" textAnchor="middle" fontSize="24" fontWeight="700" fill="#fff" fontFamily="Lato, sans-serif">X</text>
  </g>
);
const Excel = () => (
  <Tile id="excel" fill={["#ffffff", "#ffffff"]}><XSheet /></Tile>
);
const TextEdit = () => (
  <Tile id="edit" fill={["#ffffff", "#f6f6f6"]}>
    <path d="M15.500 0v90" stroke="#f6b4b4" strokeWidth="1.200" />
    <path d="M0 23.500h90M0 34.500h90M0 45.500h90M0 56.500h90M0 67.500h90M0 78.500h90" stroke="#b5b5b5" strokeWidth="1.400" />
    <path d="M88 2 48 74" stroke="#0003" strokeWidth="5" />
    <path d="M83-4 43 73" stroke="#8b98a3" strokeWidth="7" />
    <path d="M81.500-4 41.500 72" stroke="#c6d5e0" strokeWidth="3" />
    <path d="M79 3 62 34" stroke="#2d3a48" strokeWidth="2" />
    <path d="M79.500-8l3.500-2 4 2-2 7-5-2z" fill="#6f93ad" />
    <path d="M39.500 71l7 4-11 20z" fill="#777b80" />
  </Tile>
);
const Preview = () => (
  <Tile id="prev" fill={["#f6f6f4", "#e4e4e2"]}>
    <defs>
      <clipPath id="photo"><rect x="7" y="7" width="76" height="76" rx="13" /></clipPath>
      <linearGradient id="sky" x1="0" y1="0" x2="0" y2="1"><stop offset="0" stopColor="#8ab1ee" /><stop offset="1" stopColor="#b4cff6" /></linearGradient>
    </defs>
    <g clipPath="url(#photo)">
      <path d="M0 0h90v48H0z" fill="url(#sky)" />
      <path d="M0 48h90v42H0z" fill="#27406f" />
      <path d="M7 58l14 3 8-2 10 3 8 2v24H7z" fill="#c9dbe8" />
      <path d="M10 66l12 2 8-2 8 4-10 3-14-2z" fill="#5f86ab" />
      <path d="M7 76l8 1 8-3 10 2 8 4 6 4H7z" fill="#7a6144" />
    </g>
    <path d="M46 60h38l9 29q0 6-7 6H46q-7 0-7-6z" fill="#8f959a" />
    <path d="M49 62h32l8 26q-23 8-46 0z" fill="#e9edf0" />
    <path d="M63 66l8-1 4 6-9 1zM55 74l8-3 2 9-9 1zM67 75l8 0-2 6-5-1z" fill="#7d8ea8" />
    <path d="M45 86q22 9 42 0-4 7-20 7t-22-7z" fill="#fff" />
    <rect x="45.500" y="44" width="41" height="19" rx="5" fill="#111" />
    <ellipse cx="66" cy="47" rx="19" ry="3.800" fill="#2e2e2e" />
  </Tile>
);
const Downloads = () => (
  <svg width="90" height="90" viewBox="0 0 90 90">
    <defs><linearGradient id="dl" x1="0" y1="0" x2="0" y2="1"><stop offset="0" stopColor="#12baf8" /><stop offset="1" stopColor="#0f5be2" /></linearGradient></defs>
    <path d="M80 15q7-2 9 5 0 6-5 6z" fill="#2d2a38" />
    <path d="M9 16Q12 3 23 3h44q11 0 14 13z" fill="#eeeaf2" />
    <path d="M25 3q5-6 12-6M65 3q-5-6-12-6" stroke="#f0711e" strokeWidth="4" fill="none" />
    <path d="M28 10Q29-5 45-5T62 10z" fill="#f6f4f6" />
    <path d="M37 9q9-6 17 0z" fill="#2a62c4" />
    <rect x="4" y="9" width="82" height="82" rx="17" fill="url(#dl)" />
    <AMark s={0.9} x={4.5} y={9} />
  </svg>
);
const CsvFile = () => (
  <svg width="90" height="90" viewBox="0 0 90 90">
    <path d="M8 2l2-6h50l8 9h11q3 0 3 3v50H8z" fill="#1b93d6" />
    <path d="M61-3q4 8 16 20l-8-2z" fill="#e8f1f6" />
    <path d="M8 2h47l25 24v71H8z" fill="#f1f1f1" />
    <path d="M8 95.500h72.500V97H8z" fill="#bbb" />
    <path d="M55 2v22q0 3 3 3h22C71 21 64 8 55 2z" fill="#fff" stroke="#c6c6c6" strokeWidth="1" />
    <text x="44.500" y="88.500" textAnchor="middle" fontSize="10.500" fontWeight="500" fill="#666" fontFamily="Inter, sans-serif">CSV</text>
  </svg>
);
const SheetWindow = () => (
  <svg width="90" height="90" viewBox="0 0 90 90">
    <rect x="-7" y="15" width="104" height="59" fill="#fafafa" />
    <path d="M-7 15H97v10H-7z" fill="#2b2b2b" />
    <path d="M-7 25.500H97v2H-7z" fill="#e8e6c0" />
    <path d="M-7 27.500H97v3H-7z" fill="#2b2b2b" />
    <path d="M-5 18h94M-5 22h98" stroke="#8a8a8a" strokeWidth="1.200" strokeDasharray="3 4" />
    <path d="M-2 34h30M2 37h26M2 40h26M2 43h26M2 46h26M2 49h26M2 52h26M2 55h26M2 58h26M2 61h26M2 64h26M2 67h26" stroke="#ccc" strokeWidth="1" strokeDasharray="14 2" />
    <path d="M30 34h40M30 37h55M30 40h60M30 43h45M30 46h58M30 49h60M30 52h50M30 55h60M30 58h58M30 61h48M30 64h30M30 67h30" stroke="#bbb" strokeWidth="1" />
    <path d="M-7 71.500H97V74H-7z" fill="#2b2b2b" />
    <rect x="61" y="66" width="34" height="30" rx="8" fill="#fff" />
    <XSheet s={0.36} x={62} y={65.5} />
  </svg>
);
const Trash = () => (
  <svg width="90" height="90" viewBox="0 0 90 90">
    <defs>
      <linearGradient id="bin" x1="0" y1="0" x2="1" y2="0">
        <stop offset="0" stopColor="#4c5052" /><stop offset=".3" stopColor="#8a8f91" /><stop offset=".6" stopColor="#6b6f71" /><stop offset="1" stopColor="#47494b" />
      </linearGradient>
    </defs>
    <path d="M5 5h80l-9 82q-1 8-31 8t-31-8z" fill="url(#bin)" />
    <ellipse cx="45" cy="5" rx="40" ry="10" fill="#3e4143" stroke="#9a9ea0" strokeWidth="1.600" />
    <path d="M12 6l4-12 12-3 8 8 8-2 4-6 10 6 6-2 12 12-14 6H24z" fill="#ececec" />
    <path d="M30 3l6-5 6 5-6 8z" fill="#26a9d8" /><path d="M38 8l8-4 2 8z" fill="#e8453c" />
    <path d="M58 0l8 4-6 6-8-2z" fill="#355a9e" /><path d="M20-4l7 6M50-4l4 12M66 0l6 8" stroke="#666" strokeWidth="2" />
    <path d="M48 2l5 8" stroke="#f0b02c" strokeWidth="2.500" />
  </svg>
);

function Dock() {
  const left = [
    [Finder, 1], [Settings], [Launchpad], [Safari, 1], [Calendar], [Notes, 1], [ChromeIcon, 1],
    [Terminal, 1], [Code, 1], [AppStore, 0, "4"], [Slack, 1], [Eclipse],
  ];
  const mid = [[Excel, 1], [TextEdit, 1], [Preview, 1]];
  const right = [[Downloads], [CsvFile], [SheetWindow], [Trash]];
  const draw = (list) =>
    list.map(([C, running, badge], i) => (
      <Slot key={i} $running={running}>
        <C />
        {badge && <Badge>{badge}</Badge>}
      </Slot>
    ));
  return (
    <DockBar>
      {draw(left)}
      <Divider />
      {draw(mid)}
      <Divider />
      {draw(right)}
    </DockBar>
  );
}

export default function App() {
  return (
    <Desktop>
      <Global />
      <Menu />
      <Windows>
        <ChromeWindow />
        <SafariWindow />
      </Windows>
      <Dock />
    </Desktop>
  );
}
